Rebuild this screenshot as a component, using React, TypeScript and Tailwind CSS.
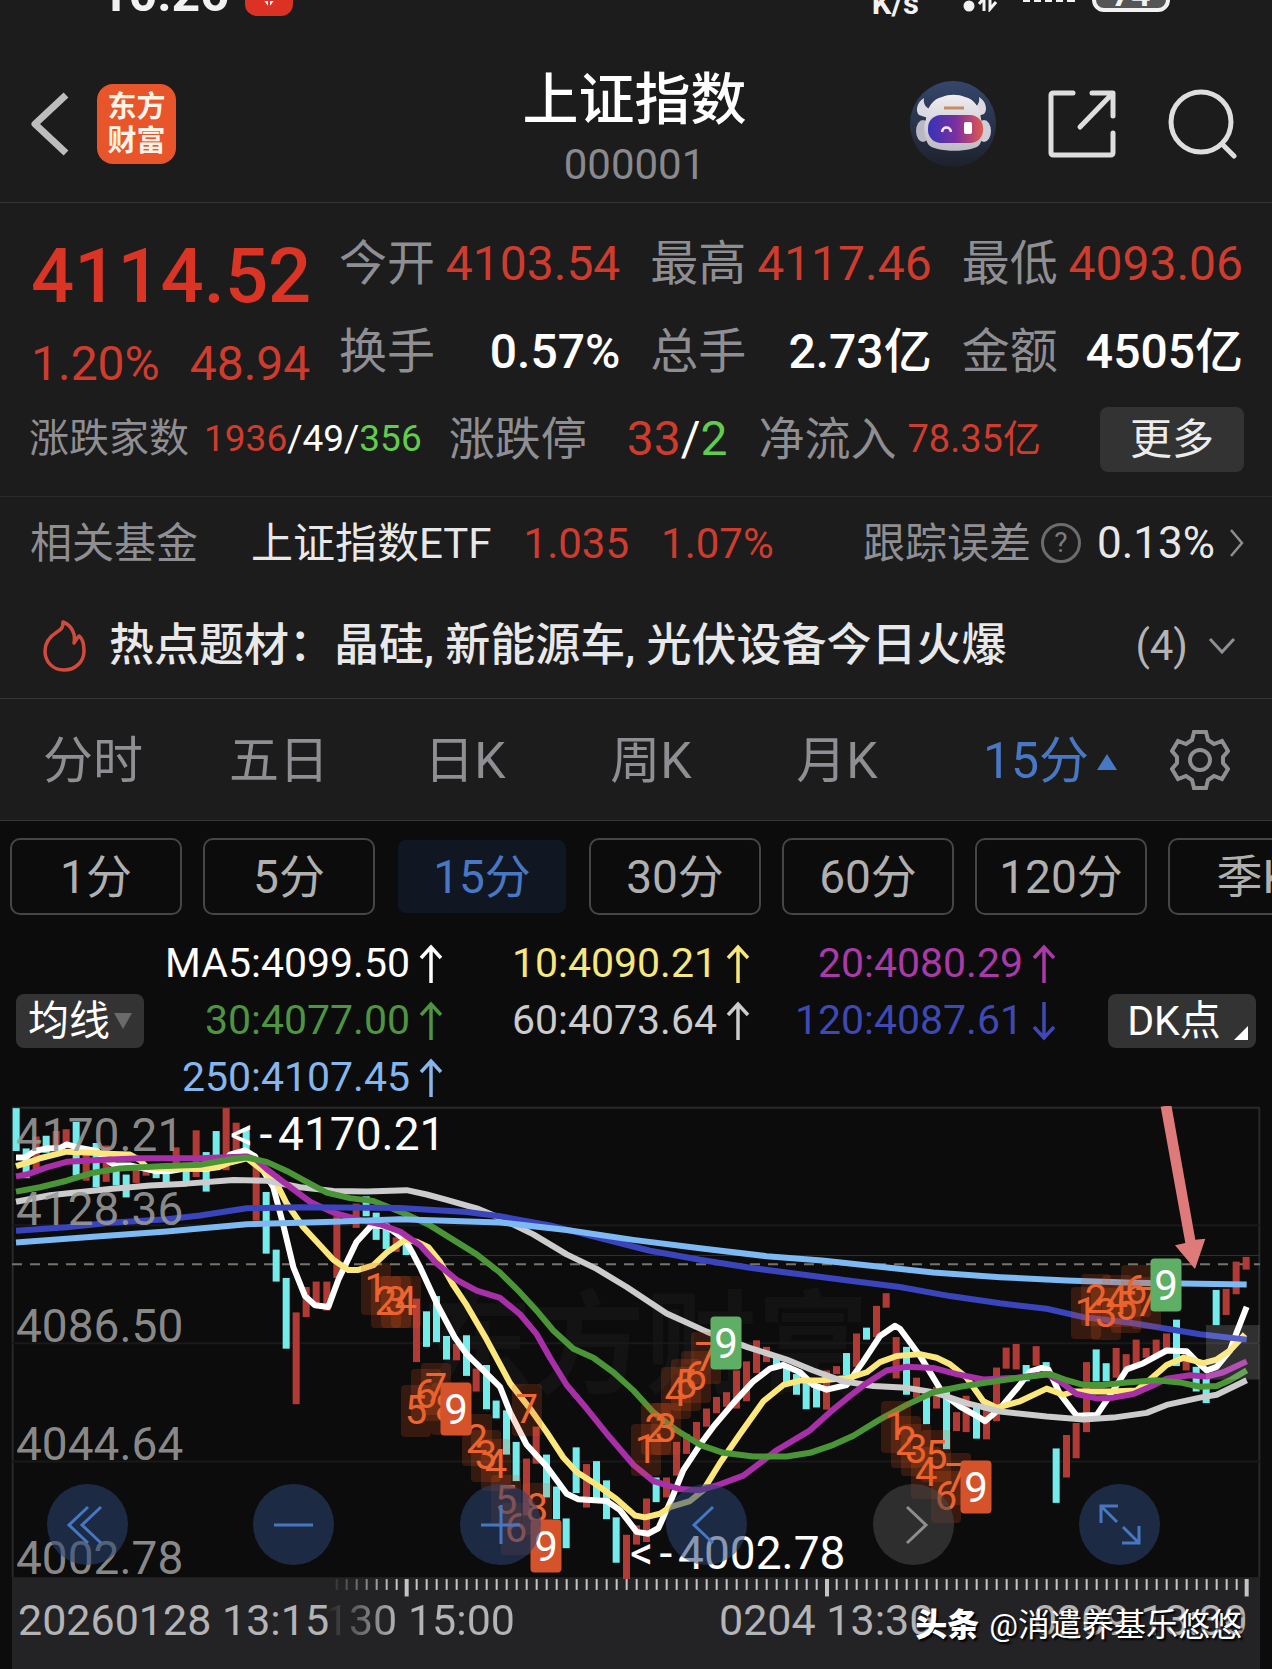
import { useState } from 'react';
import clsx from 'clsx';

const tabs = ['分时', '五日', '日K', '周K', '月K'];
const periods = ['1分', '5分', '15分', '30分', '60分', '120分', '季K'];

const quotes = [
  { label: '今开', value: '4103.54', up: true },
  { label: '最高', value: '4117.46', up: true },
  { label: '最低', value: '4093.06', up: true },
  { label: '换手', value: '0.57%' },
  { label: '总手', value: '2.73亿' },
  { label: '金额', value: '4505亿' },
];

const averages = [
  { text: 'MA5:4099.50', color: 'text-white' },
  { text: '10:4090.21', color: 'text-[#f7e77c]' },
  { text: '20:4080.29', color: 'text-[#a93aa8]' },
  { text: '30:4077.00', color: 'text-[#4f9440]' },
  { text: '60:4073.64', color: 'text-[#cccccc]' },
  { text: '120:4087.61', color: 'text-[#3f49b4]', down: true },
  { text: '250:4107.45', color: 'text-[#86b6ec]' },
];

/* chart space: 3816 wide, y from 16 to 1568 */
const W = 3816;
const TOP = 16;
const H = 1552;
const at = (x: number, y: number) => ({
  left: `${(x / W) * 100}%`,
  top: `${((y - TOP) / H) * 100}%`,
});

/* x, top, bottom, 1 = up (red) / 0 = down (cyan) */
const candles = [
  [48, 22, 140, 0], [78, 133, 215, 0], [108, 100, 195, 1], [138, 98, 145, 0], [168, 85, 130, 1], [198, 80, 120, 1],
  [228, 60, 208, 0], [258, 140, 222, 1], [288, 118, 240, 0], [318, 125, 225, 1], [348, 178, 235, 0], [378, 205, 268, 0],
  [408, 180, 228, 1], [438, 185, 208, 1], [468, 190, 215, 0], [498, 190, 230, 0], [528, 130, 198, 1], [558, 180, 228, 0],
  [588, 83, 212, 1], [618, 143, 252, 0], [648, 85, 165, 0], [678, 22, 193, 1], [708, 62, 150, 1], [738, 78, 145, 0],
  [768, 170, 332, 1], [798, 253, 423, 0], [828, 412, 500, 0], [858, 490, 685, 0], [888, 585, 838, 1], [918, 515, 598, 1],
  [948, 500, 570, 1], [980, 500, 580, 1], [1010, 320, 490, 1], [1068, 285, 352, 1], [1098, 265, 320, 0], [1128, 310, 385, 0],
  [1158, 340, 410, 0], [1188, 378, 418, 1], [1218, 385, 427, 0], [1249, 547, 722, 1], [1279, 582, 680, 0],
  [1309, 540, 667, 0], [1339, 650, 715, 0], [1369, 672, 717, 1], [1399, 648, 760, 0], [1428, 740, 803, 1], [1459, 730, 852, 0],
  [1488, 828, 877, 0], [1519, 855, 977, 0], [1548, 942, 1050, 0], [1579, 988, 1145, 1], [1608, 900, 1002, 1], [1639, 977, 1095, 0],
  [1669, 1065, 1155, 0], [1698, 1153, 1235, 0], [1728, 957, 1083, 0], [1759, 1003, 1123, 1], [1789, 995, 1098, 0],
  [1819, 1048, 1155, 0], [1848, 1150, 1275, 0], [1879, 1198, 1320, 1], [1909, 1172, 1225, 1], [1939, 1098, 1218, 1],
  [1968, 1040, 1108, 0], [1999, 1040, 1095, 1], [2029, 942, 1035, 1], [2059, 920, 975, 1], [2089, 887, 945, 1],
  [2119, 850, 900, 1], [2149, 818, 863, 1], [2179, 805, 845, 1], [2209, 745, 850, 1], [2239, 720, 830, 1], [2269, 662, 752, 1],
  [2299, 680, 722, 1], [2329, 705, 740, 0], [2359, 730, 782, 0], [2389, 755, 812, 0], [2418, 775, 852, 0], [2449, 785, 847, 0],
  [2479, 745, 853, 1], [2509, 733, 755, 1], [2539, 697, 758, 0], [2569, 643, 735, 1], [2599, 627, 660, 0], [2629, 567, 653, 1],
  [2658, 532, 572, 1], [2688, 653, 767, 1], [2719, 680, 812, 0], [2749, 765, 820, 1], [2779, 815, 893, 0], [2809, 790, 850, 1],
  [2839, 790, 962, 0], [2869, 860, 912, 1], [2898, 815, 915, 1], [2929, 840, 933, 0], [2959, 848, 935, 1], [2989, 737, 885, 1],
  [3018, 682, 740, 1], [3048, 672, 742, 1], [3078, 730, 775, 0], [3108, 678, 732, 1], [3138, 722, 755, 0], [3168, 960, 1110, 0],
  [3199, 923, 1040, 1], [3228, 890, 987, 1], [3259, 722, 915, 1], [3288, 687, 775, 0], [3318, 725, 775, 0], [3348, 683, 765, 1],
  [3378, 700, 745, 1], [3408, 660, 728, 1], [3438, 683, 710, 1], [3468, 660, 705, 1], [3499, 643, 695, 1], [3529, 605, 733, 0],
  [3558, 700, 745, 1], [3588, 735, 803, 0], [3618, 765, 835, 0], [3648, 523, 620, 0], [3678, 520, 592, 1], [3708, 445, 535, 1],
  [3738, 432, 467, 1],
];

const lines = [
  {
    color: '#ffffff',
    points:
      '48,158 75,158 105,140 140,133 180,132 200,122 240,132 290,140 320,165 345,180 390,180 430,188 470,196 510,195 560,188 620,190 660,182 690,150 735,138 765,155 790,195 820,240 850,345 880,460 915,540 945,565 985,570 1015,495 1070,390 1115,345 1160,348 1215,385 1240,425 1260,460 1310,560 1365,655 1400,700 1450,745 1500,790 1530,860 1580,950 1640,1010 1700,1085 1735,1100 1820,1105 1860,1130 1910,1190 1945,1195 1975,1180 2010,1110 2050,1020 2100,950 2140,900 2200,835 2260,775 2310,740 2350,730 2400,750 2440,785 2480,798 2540,785 2590,720 2640,650 2685,622 2700,630 2760,705 2830,810 2880,845 2930,870 2955,885 3000,850 3055,790 3090,748 3125,738 3145,742 3180,810 3230,870 3290,868 3340,800 3380,742 3430,725 3500,690 3560,692 3590,720 3620,745 3650,735 3690,690 3710,640 3740,570',
  },
  {
    color: '#fbe77a',
    points:
      '48,182 90,170 120,160 200,142 280,145 340,148 390,150 420,165 440,185 520,190 600,188 655,185 690,172 740,160 790,195 830,230 860,285 910,350 960,400 1000,440 1045,468 1075,468 1120,455 1160,420 1215,385 1250,390 1285,405 1320,445 1360,510 1400,565 1460,660 1530,780 1590,850 1640,915 1690,985 1730,1025 1790,1060 1850,1100 1905,1145 1935,1150 1980,1140 2010,1122 2070,1105 2110,1075 2160,1000 2220,920 2290,830 2350,785 2400,773 2466,772 2550,765 2600,750 2640,722 2690,705 2760,700 2810,710 2850,728 2900,765 2950,830 2990,848 3060,830 3140,795 3190,812 3220,803 3330,803 3410,800 3450,770 3500,730 3550,710 3610,725 3650,715 3690,690 3735,645',
  },
  {
    color: '#cccccc',
    points:
      '48,280 150,262 220,255 330,245 450,235 560,230 700,220 800,222 900,240 1000,250 1100,252 1220,248 1280,260 1340,275 1430,298 1500,325 1600,370 1700,425 1790,465 1880,515 2000,588 2120,638 2240,680 2360,715 2440,745 2530,775 2620,788 2720,793 2800,805 2900,835 3000,858 3140,872 3250,880 3340,875 3440,862 3500,840 3600,820 3650,812 3740,772',
  },
  {
    color: '#a92fa9',
    points:
      '48,210 80,205 140,185 200,170 300,165 420,160 600,160 740,155 770,165 800,190 850,225 930,280 1000,310 1080,330 1140,342 1200,362 1260,400 1310,450 1370,495 1430,525 1500,545 1560,590 1610,645 1650,710 1700,785 1760,850 1830,930 1900,1005 1960,1050 2040,1072 2100,1075 2150,1062 2230,1035 2330,965 2430,910 2490,860 2550,815 2600,780 2660,745 2720,735 2800,738 2870,755 2950,770 3050,765 3140,755 3180,775 3230,810 3290,822 3340,820 3400,810 3450,790 3500,768 3570,758 3620,762 3670,750 3740,720',
  },
  {
    color: '#4a9636',
    points:
      '48,252 120,240 200,222 280,200 360,188 480,182 600,178 680,165 740,158 800,170 860,195 920,225 980,255 1050,270 1120,278 1180,300 1220,315 1290,345 1360,385 1430,425 1500,475 1560,530 1610,580 1660,635 1720,685 1780,710 1840,750 1900,800 1960,860 2030,910 2100,950 2170,972 2260,982 2360,982 2430,972 2500,950 2560,925 2640,880 2720,840 2800,805 2880,790 2960,778 3060,765 3150,755 3200,772 3250,785 3310,785 3380,778 3470,772 3540,778 3600,790 3650,788 3690,772 3740,745',
  },
  {
    color: '#3a45bd',
    points:
      '48,360 200,350 330,338 500,328 600,318 740,298 900,295 1200,297 1400,308 1500,320 1650,345 1800,380 1950,415 2100,440 2250,462 2400,480 2550,498 2700,515 2850,540 3000,560 3140,575 3250,598 3400,615 3600,645 3740,660',
  },
  {
    color: '#7db9f2',
    points:
      '48,392 300,375 500,362 740,342 1000,335 1200,328 1500,337 1700,358 1900,385 2100,408 2300,430 2466,442 2800,475 3000,488 3200,497 3400,503 3740,508',
  },
];

/* digit, x, y of the box centre */
const counts: [number, number, number][] = [
  [1, 1127, 521], [2, 1157, 557], [3, 1187, 555], [4, 1217, 557],
  [5, 1248, 856], [6, 1278, 814], [7, 1308, 795], [8, 1338, 850],
  [2, 1430, 936], [3, 1458, 980], [4, 1488, 1005], [5, 1518, 1105], [6, 1548, 1182], [7, 1580, 853], [8, 1610, 1128],
  [1, 1938, 965], [2, 1967, 907], [3, 1997, 907], [4, 2027, 808], [5, 2057, 785], [6, 2087, 762], [7, 2117, 712],
  [1, 2687, 900], [2, 2717, 942], [3, 2749, 965], [4, 2779, 1028], [5, 2809, 980], [6, 2838, 1094], [7, 2868, 1045],
  [1, 3258, 588], [2, 3288, 550], [3, 3318, 590], [4, 3350, 553], [5, 3378, 570], [6, 3408, 525], [7, 3438, 558],
];

const nines = [
  { x: 1368, y: 850, up: false },
  { x: 1638, y: 1228, up: false },
  { x: 2178, y: 670, up: true },
  { x: 2928, y: 1067, up: false },
  { x: 3498, y: 510, up: true },
];

const prices = [
  { text: '4170.21', y: 95 },
  { text: '4128.36', y: 300 },
  { text: '4086.50', y: 622 },
  { text: '4044.64', y: 948 },
  { text: '4002.78', y: 1262 },
];

const extremes = [
  { text: '4170.21', x: 690, y: 93 },
  { text: '4002.78', x: 1890, y: 1247 },
];

const ticks = Array.from({ length: 92 }, (_, i) => 1010 + i * 30);
const majors = [1220, 2481, 3740];

const controls = [
  { label: '最早', d: 'M41 23 22 41l19 18M54 23 35 41l19 18' },
  { label: '缩小', d: 'M21 41h39' },
  { label: '放大', d: 'M21 41h39M41 21v39' },
  { label: '向左', d: 'M47 23 28 41l19 18' },
  { label: '向右', d: 'M34 23 53 41 34 59', off: true },
  { label: '全屏', d: 'M39 22H22v17M22 22l16 16M43 59h17V42M60 59 44 43' },
];

function StatusBar() {
  return (
    <div className="h-6 overflow-hidden">
      <div className="-mt-[30px] flex h-[54px] items-end pr-[102px] pb-[6px] pl-[100px] text-[#f2f2f2]">
        <span className="text-[50px] leading-[48px] font-bold">10:26</span>
        <span className="mb-[2px] ml-4 flex h-12 w-12 items-end justify-center rounded-xl bg-[#dc3226]">
          <svg viewBox="0 0 48 48" className="h-12 w-12">
            <path d="M14 26l10 13 10-13z" fill="#fff" />
            <path d="M18 32h12M24 26v13M20 28l3 3M28 28l-3 3" stroke="#dc3226" strokeWidth="2" />
          </svg>
        </span>
        <span className="ml-auto text-[31px] leading-[28px] font-bold">K/s</span>
        <svg viewBox="0 0 34 20" className="mb-[6px] ml-[44px] h-5 w-[34px]">
          <circle cx="6" cy="14" r="5.5" fill="#f2f2f2" />
          <path d="M21 19V6l-5 6M27 4v13l6-7" fill="none" stroke="#f2f2f2" strokeWidth="3" />
        </svg>
        <svg viewBox="0 0 52 6" className="mb-[16px] ml-[26px] h-[6px] w-[52px]">
          <path d="M0 4h7M11 4h7M22 4h7M33 4h7M44 4h8" stroke="#f2f2f2" strokeWidth="4" />
        </svg>
        <span className="mb-[6px] ml-[17px] flex h-[36px] w-[78px] items-end justify-center rounded-xl border-4 border-[#f2f2f2] bg-[#555] text-[34px] leading-[28px] font-bold">
          74
        </span>
      </div>
    </div>
  );
}

function Robot() {
  return (
    <svg viewBox="0 0 86 86" className="h-[86px] w-[86px]">
      <defs>
        <linearGradient id="disc" x1="0" y1="0" x2="0" y2="1">
          <stop offset="0" stopColor="#34466b" />
          <stop offset="1" stopColor="#1d212b" />
        </linearGradient>
        <linearGradient id="visor" x1="0" y1="0" x2="1" y2="0">
          <stop offset="0" stopColor="#3534b8" />
          <stop offset="0.5" stopColor="#7a2fa0" />
          <stop offset="1" stopColor="#e2584f" />
        </linearGradient>
        <linearGradient id="shell" x1="0" y1="0" x2="0" y2="1">
          <stop offset="0" stopColor="#efedf0" />
          <stop offset="1" stopColor="#bdbac2" />
        </linearGradient>
      </defs>
      <circle cx="43" cy="43" r="43" fill="url(#disc)" />
      <path d="M14 17c-7 4-9 13-5 17l9 3 4-9c-6 0-9-5-8-11zM69 16c7 4 9 13 5 17l-9 3-4-9c6 0 9-5 8-11z" fill="#dcd9e0" />
      <ellipse cx="13" cy="50" rx="7" ry="11" fill="#b9b7c4" />
      <ellipse cx="74" cy="50" rx="7" ry="11" fill="#cfcdd6" />
      <path d="M16 38c1-12 7-20 16-22 7-3 16-3 23 0 9 2 15 10 16 22 3 9 3 17-1 25-4 9-47 9-52 0-4-8-5-17-2-25z" fill="url(#shell)" />
      <path d="M34 27h20" stroke="#c98d63" strokeWidth="3" />
      <rect x="18" y="34" width="55" height="28" rx="13" fill="url(#visor)" />
      <path d="M32 51c1-6 8-6 9 0" fill="none" stroke="#f3e9ff" strokeWidth="2.5" />
      <rect x="54" y="41" width="8" height="12" rx="2" fill="#fff" />
    </svg>
  );
}

function Header() {
  return (
    <header className="grid h-[179px] grid-cols-[1fr_auto_1fr] items-center border-b border-[#343436] pt-[22px] pr-[34px] pl-[31px]">
      <div className="flex items-center gap-7">
        <button aria-label="返回">
          <svg viewBox="0 0 38 64" className="h-16 w-[38px]">
            <path d="M35 3 4 32l31 29" fill="none" stroke="#bdbdbd" strokeWidth="7" strokeLinejoin="round" />
          </svg>
        </button>
        <a
          href="#"
          className="flex h-20 w-[79px] flex-col items-center justify-center rounded-2xl bg-[#e8552b] text-[29px] leading-[34px] font-bold text-[#fff3e6]"
        >
          <span>东方</span>
          <span>财富</span>
        </a>
      </div>
      <div className="pt-4 text-center">
        <h1 className="text-[56px] leading-[66px] font-medium text-white">上证指数</h1>
        <p className="text-[42px] leading-[64px] text-[#8a8a8e]">000001</p>
      </div>
      <div className="flex items-center justify-end gap-[52px]">
        <button aria-label="助手">
          <Robot />
        </button>
        <button aria-label="分享">
          <svg viewBox="0 0 68 68" className="h-[68px] w-[68px]" fill="none" stroke="#dedede" strokeWidth="5" strokeLinecap="round" strokeLinejoin="round">
            <path d="M25 3H5a2 2 0 0 0-2 2v58a2 2 0 0 0 2 2h58a2 2 0 0 0 2-2V43" />
            <path d="M44 3h21v23M64 4 32 37" />
          </svg>
        </button>
        <button aria-label="搜索">
          <svg viewBox="0 0 70 70" className="h-[70px] w-[70px]" fill="none" stroke="#dedede" strokeWidth="5" strokeLinecap="round">
            <circle cx="33" cy="33" r="30" />
            <path d="m55 56 11 11" />
          </svg>
        </button>
      </div>
    </header>
  );
}

function QuotePanel() {
  return (
    <section className="border-b border-[#2a2a2c] pt-[17px] pb-[14px]">
      <div className="flex pr-[29px] pl-[31px]">
        <div className="h-[176px] w-[308px] shrink-0 pt-2 text-[#d93424]">
          <p className="text-[76px] leading-[96px] font-medium">4114.52</p>
          <p className="flex gap-[30px] text-[48px] leading-[80px] text-[#cf3c2e]">
            <span>1.20%</span>
            <span>48.94</span>
          </p>
        </div>
        <dl className="grid flex-1 grid-cols-3 gap-x-[30px]">
          {quotes.map((q) => (
            <div key={q.label} className="flex justify-between text-[48px] leading-[88px] whitespace-nowrap">
              <dt className="text-[#8e8e93]">{q.label}</dt>
              <dd className={q.up ? 'text-[#cf3c2e]' : 'font-medium text-white'}>{q.value}</dd>
            </div>
          ))}
        </dl>
      </div>
      <div className="flex h-[86px] items-center pr-7 pl-[29px] whitespace-nowrap">
        <span className="text-[40px] text-[#8e8e93]">涨跌家数</span>
        <span className="ml-[15px] text-[37px] text-white">
          <span className="text-[#cf3c2e]">1936</span>/49/<span className="text-[#62cc4c]">356</span>
        </span>
        <span className="ml-[27px] text-[46px] text-[#8e8e93]">涨跌停</span>
        <span className="ml-10 text-[48px] text-white">
          <span className="text-[#cf3c2e]">33</span>/<span className="text-[#62cc4c]">2</span>
        </span>
        <span className="ml-[31px] text-[46px] text-[#8e8e93]">净流入</span>
        <span className="ml-[11px] text-[38px] text-[#cf3c2e]">78.35亿</span>
        <button className="ml-auto h-[65px] w-36 rounded-lg bg-[#333334] text-[42px] leading-[65px] text-[#ececec]">
          更多
        </button>
      </div>
    </section>
  );
}

function FundRow() {
  return (
    <div className="flex h-[92px] items-center pr-7 pl-[30px] text-[42px] whitespace-nowrap">
      <span className="text-[#8e8e93]">相关基金</span>
      <a href="#" className="ml-[53px] flex items-center gap-8 text-[#e8e8e8]">
        <span>上证指数ETF</span>
        <span className="text-[#cf3c2e]">1.035</span>
        <span className="text-[#cf3c2e]">1.07%</span>
      </a>
      <span className="ml-auto text-[#8e8e93]">跟踪误差</span>
      <button
        aria-label="说明"
        className="ml-[10px] h-10 w-10 rounded-full border-[3px] border-[#6c6c6f] text-[28px] leading-[34px] text-[#7c7c80]"
      >
        ?
      </button>
      <a href="#" className="ml-4 flex items-center gap-[14px] text-[44px] text-[#e8e8e8]">
        0.13%
        <svg viewBox="0 0 15 30" className="h-[30px] w-[15px]">
          <path d="m2 2 11 13L2 28" fill="none" stroke="#8e8e93" strokeWidth="2.5" />
        </svg>
      </a>
    </div>
  );
}

function HotRow() {
  return (
    <div className="flex h-[110px] items-center border-b border-[#363638] pt-1 pr-9 pl-[43px] whitespace-nowrap">
      <svg viewBox="0 0 44 52" className="h-[52px] w-11" fill="none" stroke="#d24a3c" strokeWidth="3.5" strokeLinejoin="round">
        <path d="M20 2c0 5-1 7-6 10C6 17 2 23 2 31c0 11 8 19 19 19s20-8 20-19c0-6-1-12-5-15-2 2-3 4-5 7 2-10-3-18-11-21z" />
      </svg>
      <a href="#" className="ml-[22px] text-[45px] font-medium text-[#e8e8e8]">
        热点题材：晶硅, 新能源车, 光伏设备今日火爆
      </a>
      <button className="ml-auto flex items-center gap-5 text-[42px] text-[#b4b4b6]">
        (4)
        <svg viewBox="0 0 28 18" className="h-[18px] w-7">
          <path d="m2 2 12 13L26 2" fill="none" stroke="#8e8e93" strokeWidth="3" />
        </svg>
      </button>
    </div>
  );
}

function Tabs({ period }: { period: string }) {
  return (
    <nav className="flex h-[122px] items-center border-b border-[#363638] pr-[42px] text-[50px] text-[#8e8e93]">
      <div className="grid flex-1 grid-cols-[31fr_31fr_31fr_31fr_31fr_40fr] pt-1">
        {tabs.map((tab) => (
          <button key={tab}>{tab}</button>
        ))}
        <button className="flex items-center justify-center gap-2 text-[#4878c4]">
          {period}
          <svg viewBox="0 0 20 16" className="h-4 w-5">
            <path d="m10 0 10 16H0z" fill="currentColor" />
          </svg>
        </button>
      </div>
      <button aria-label="设置">
        <svg viewBox="0 0 60 60" className="h-[60px] w-[60px]" fill="none" stroke="#8e8e93" strokeWidth="4">
          <path d="M24 2h12l2 8 6 4 8-3 6 10-5 6v6l5 6-6 10-8-3-6 4-2 8H24l-2-8-6-4-8 3-6-10 5-6v-6l-5-6 6-10 8 3 6-4z" />
          <circle cx="30" cy="30" r="10" />
        </svg>
      </button>
    </nav>
  );
}

function Averages() {
  return (
    <div className="mt-5 flex items-center px-4">
      <button className="flex h-[54px] w-32 items-center justify-center gap-1 rounded-lg bg-[#333334] text-[41px] leading-[54px] text-white">
        均线
        <svg viewBox="0 0 18 16" className="h-4 w-[18px]">
          <path d="M0 0h18L9 16z" fill="#6a6a6c" />
        </svg>
      </button>
      <ul className="mr-[52px] grid flex-1 grid-cols-[299fr_307fr_306fr] text-[41px] leading-[57px]">
        {averages.map((a) => (
          <li key={a.text} className={clsx('flex items-center justify-end gap-[9px] whitespace-nowrap', a.color)}>
            {a.text}
            <svg viewBox="0 0 24 40" className="h-10 w-6" fill="none" stroke="currentColor" strokeWidth="3.5">
              {a.down ? <path d="M12 1v36M2 26l10 11 10-11" /> : <path d="M12 39V3M2 14 12 3l10 11" />}
            </svg>
          </li>
        ))}
      </ul>
      <button className="relative h-[54px] w-[148px] rounded-lg bg-[#333334] pr-4 text-[41px] leading-[54px] text-white">
        DK点
        <svg viewBox="0 0 14 14" className="absolute right-2 bottom-2 h-[14px] w-[14px]">
          <path d="M14 0v14H0z" fill="#fff" />
        </svg>
      </button>
    </div>
  );
}

function Chart() {
  return (
    <section className="relative h-[563px] overflow-hidden">
      <p className="absolute -translate-x-1/2 -translate-y-1/2 text-[112px] leading-none font-bold whitespace-nowrap text-white/3" style={at(1935, 680)}>
        东方财富
      </p>
      <svg viewBox={`0 ${TOP} ${W} ${H}`} preserveAspectRatio="none" className="absolute inset-0 h-full w-full">
        <defs>
          <linearGradient id="fade" gradientUnits="userSpaceOnUse" x1="980" y1="0" x2="1180" y2="0">
            <stop offset="0" stopColor="#c4c4c4" stopOpacity="0" />
            <stop offset="1" stopColor="#c4c4c4" />
          </linearGradient>
        </defs>
        <rect x="36" y="1315" width="3744" height="260" fill="#232325" />
        <g fill="none" stroke="#29292b" strokeWidth="2">
          <path d="M36 21H3780M38 21V1315M3778 21V1315" vectorEffect="non-scaling-stroke" />
          <path d="M36 345H3780M36 670H3780M36 996H3780" stroke="#19191b" vectorEffect="non-scaling-stroke" />
          <path d="M1300 428H3780" stroke="#323234" strokeWidth="1" vectorEffect="non-scaling-stroke" />
        </g>
        <path d="M36 452H3780" stroke="#77736a" strokeWidth="2" strokeDasharray="10 8" vectorEffect="non-scaling-stroke" />
        {candles.map(([x, top, bottom, up]) => (
          <rect key={x} x={x - 10} y={top} width="21" height={bottom - top} fill={up ? '#b23a35' : '#74ecec'} />
        ))}
        {lines.map((l) => (
          <polyline
            key={l.color}
            points={l.points}
            fill="none"
            stroke={l.color}
            strokeWidth="6"
            strokeLinejoin="round"
            vectorEffect="non-scaling-stroke"
          />
        ))}
        <rect x="3618" y="620" width="160" height="150" fill="#fff" fillOpacity="0.15" />
        <g fill="url(#fade)">
          {ticks.map((x) => (
            <rect key={x} x={x - 3} y="1320" width="6" height="30" />
          ))}
          {majors.map((x) => (
            <rect key={x} x={x - 6} y="1320" width="12" height="48" />
          ))}
        </g>
      </svg>

      {prices.map((p) => (
        <span key={p.text} className="absolute -translate-y-1/2 text-[46px] leading-none text-[#9a9a9a]/90" style={at(48, p.y)}>
          {p.text}
        </span>
      ))}

      {counts.map(([n, x, y]) => (
        <span
          key={`${n}-${x}`}
          className="absolute h-[52px] w-[30px] -translate-x-1/2 -translate-y-1/2 rounded-sm bg-[#e0561c]/20 text-center text-[40px] leading-[52px] text-[#ee6630]"
          style={at(x, y)}
        >
          {n}
        </span>
      ))}
      {nines.map((n) => (
        <span
          key={n.x}
          className={clsx(
            'absolute h-[53px] w-[31px] -translate-x-1/2 -translate-y-1/2 rounded-sm text-center text-[42px] leading-[53px] text-white',
            n.up ? 'bg-[#5fae66]' : 'bg-[#d4532b]',
          )}
          style={at(n.x, n.y)}
        >
          9
        </span>
      ))}

      {extremes.map((e) => (
        <span
          key={e.text}
          className="absolute flex -translate-y-1/2 gap-[6px] text-[46px] leading-none whitespace-nowrap text-white"
          style={at(e.x, e.y)}
        >
          <span>&lt;</span>
          <span>-</span>
          <span>{e.text}</span>
        </span>
      ))}

      <svg viewBox={`0 ${TOP} ${W} ${H}`} preserveAspectRatio="none" className="absolute inset-0 h-full w-full">
        <path d="M3482 18l32-5 72 372 30-3-31 83-60-65 31-6z" fill="#df7a7a" />
      </svg>

      <div className="absolute top-[378px] right-[112px] left-[47px] flex justify-between">
        {controls.map((c) => (
          <button
            key={c.label}
            aria-label={c.label}
            className={clsx('h-[81px] w-[81px] rounded-full', c.off ? 'bg-[#4a4a4a]/55 text-[#8e8e8e]' : 'bg-[#294473]/55 text-[#4677c2]')}
          >
            <svg viewBox="0 0 81 81" className="h-full w-full" fill="none" stroke="currentColor" strokeWidth="3">
              <path d={c.d} />
            </svg>
          </button>
        ))}
      </div>

      <div className="text-[43px] leading-none whitespace-nowrap text-[#b4b4b6]">
        <span className="absolute -translate-y-1/2" style={at(54, 1432)}>
          20260128 13:15
        </span>
        <span
          className="absolute -translate-x-full -translate-y-1/2 bg-linear-to-r from-transparent from-12% to-[#b4b4b6] to-45% bg-clip-text text-transparent"
          style={at(1545, 1432)}
        >
          0130 15:00
        </span>
        <span className="absolute -translate-y-1/2" style={at(2157, 1432)}>
          0204 13:30
        </span>
        <span className="absolute -translate-x-full -translate-y-1/2" style={at(3742, 1432)}>
          0209 13:30
        </span>
      </div>
      <p
        className="absolute flex -translate-x-full -translate-y-1/2 items-center gap-[10px] text-[32px] leading-none whitespace-nowrap text-white [text-shadow:2px_2px_2px_#000]"
        style={at(3726, 1448)}
      >
        <b className="font-black">头条</b>
        <span>@消遣养基乐悠悠</span>
      </p>
    </section>
  );
}

export default function App() {
  const [period, setPeriod] = useState('15分');

  return (
    <main className="w-full overflow-hidden bg-[#0c0c0d] font-[Roboto,'Noto_Sans_CJK_SC',sans-serif]">
      <div className="bg-[#1c1c1c]">
        <StatusBar />
        <Header />
        <QuotePanel />
        <FundRow />
        <HotRow />
        <Tabs period={period} />
      </div>

      {/* 分钟周期 */}
      <div className="flex gap-[21px] overflow-hidden pt-[17px] pl-[10px]">
        {periods.map((p) => (
          <button
            key={p}
            onClick={() => setPeriod(p)}
            className={clsx(
              'h-[77px] w-[172px] shrink-0 rounded-[10px] border-2 text-[46px] leading-[70px]',
              p === period ? 'border-[#0c0c0d] bg-[#111722] text-[#4878c4]' : 'border-[#464648] text-[#b0b0b0]',
            )}
          >
            {p}
          </button>
        ))}
      </div>

      <Averages />
      <Chart />
    </main>
  );
}
